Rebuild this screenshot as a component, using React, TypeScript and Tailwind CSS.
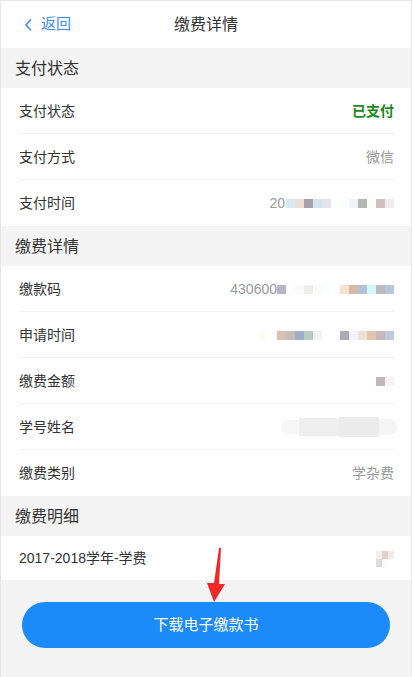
import React from "react";

const cn = "font-['Liberation_Sans','Noto_Sans_CJK_SC',sans-serif]";

function Blocks({ colors }: { colors: string[] }) {
  return (
    <span className="flex items-center">
      {colors.map((c, i) => (
        <span key={i} className="inline-block w-[9px] h-[9px]" style={{ background: c }} />
      ))}
    </span>
  );
}

function Section({ title }: { title: string }) {
  return (
    <div className="h-10 bg-[#f4f4f4] flex items-center pl-[14px] pt-[1px] text-[16px] text-[#333]">{title}</div>
  );
}

function Row({ label, children, last }: { label: string; children?: React.ReactNode; last?: boolean }) {
  return (
    <div className="bg-white pl-[18px] pr-[17px]">
      <div className={"h-[46px] flex items-center justify-between pt-[1px] " + (last ? "" : "border-b border-[#f1f1f1]")}>
        <span className="text-[14px] text-[#333]">{label}</span>
        <span className="text-[14px] text-[#999] flex items-center">{children}</span>
      </div>
    </div>
  );
}

export default function App() {
  return (
    <div className={cn + " w-[412px] h-[677px] bg-[#f4f4f4] border border-[#e6e6e6] border-b-0 relative overflow-hidden"}>
      <div className="h-[47px] bg-white flex items-center relative">
        <div className="flex items-center gap-[8px] pl-[23px] text-[#3b8cf5] text-[15px]">
          <svg width="9" height="14" viewBox="0 0 9 14" fill="none">
            <path d="M7 1.5L2 7l5 5.5" stroke="#3b8cf5" strokeWidth="1.6" />
          </svg>
          <span>返回</span>
        </div>
        <div className="absolute left-0 right-0 text-center text-[16px] text-[#333] pointer-events-none">缴费详情</div>
      </div>

      <Section title="支付状态" />
      <Row label="支付状态">
        <span className="text-[#1a8a1a] font-bold">已支付</span>
      </Row>
      <Row label="支付方式">微信</Row>
      <Row label="支付时间" last>
        <span className="mr-[1px]">20</span>
        <Blocks colors={["#d8e8f4", "#eadfd2", "#a9a0a9", "#d2e4f0", "#e3e4ea", "#fff", "#fdfdfd", "#f0f3f8", "#b5b5b2", "#fdfbf5", "#cdc0be", "#ebebf0"]} />
      </Row>

      <Section title="缴费详情" />
      <Row label="缴款码">
        <span>430600</span>
        <Blocks colors={["#b8b6c4", "#fff", "#fafafa", "#eeeeee", "#fbfbf9", "#fbfeff", "#fff", "#f7e2d0", "#d7b9a8", "#b3c2d7", "#d6f7fa", "#bdbbc2", "#b9c7da"]} />
      </Row>
      <Row label="申请时间">
        <Blocks colors={["#fdfcf7", "#fff", "#d7c0b4", "#c8bdbb", "#9fadc6", "#b9cac6", "#f2f2f2", "#fff", "#fff", "#acabb6", "#f2f4f9", "#ede1d6", "#dfc6ae", "#c7b8bc", "#bdcadb"]} />
      </Row>
      <Row label="缴费金额">
        <Blocks colors={["#c3b6b6", "#f5f5f5"]} />
      </Row>
      <Row label="学号姓名">
        <span className="flex items-center mr-[-3px]">
          <span className="w-[18px] h-[14px] bg-[#f6f6f6] rounded-l-full" />
          <span className="w-[40px] h-[18px] bg-[#efefef]" />
          <span className="w-[40px] h-[20px] bg-[#ececec]" />
          <span className="w-[18px] h-[16px] bg-[#f5f5f5] rounded-r-full" />
        </span>
      </Row>
      <Row label="缴费类别" last>学杂费</Row>

      <Section title="缴费明细" />
      <div className="bg-white h-[44px] flex items-center justify-between pl-[18px] pr-[17px] pt-[1px]">
        <span className="text-[14px] text-[#333]">2017-2018学年-学费</span>
        <span className="grid grid-cols-3">
          <span className="w-[6px] h-[8px] bg-[#f2ede8]" />
          <span className="w-[6px] h-[8px] bg-[#e0d2c6]" />
          <span className="w-[6px] h-[8px] bg-[#f0ebe8]" />
          <span className="w-[6px] h-[8px] bg-[#dcdce0]" />
          <span className="w-[6px] h-[8px] bg-[#fafafa]" />
          <span className="w-[6px] h-[8px] bg-white" />
        </span>
      </div>

      <div className="px-[21px] pt-[22px]">
        <button className="w-full h-[46px] rounded-full bg-[#1c8af8] text-white text-[15px]">下载电子缴款书</button>
      </div>

      <svg className="absolute left-[202px] top-[545px]" width="26" height="58" viewBox="0 0 26 58">
        <path d="M16 2 L18 2 L16 38 L22 38 L11 56 L4 37 L11 37 Z" fill="#f2272a" />
      </svg>
    </div>
  );
}
